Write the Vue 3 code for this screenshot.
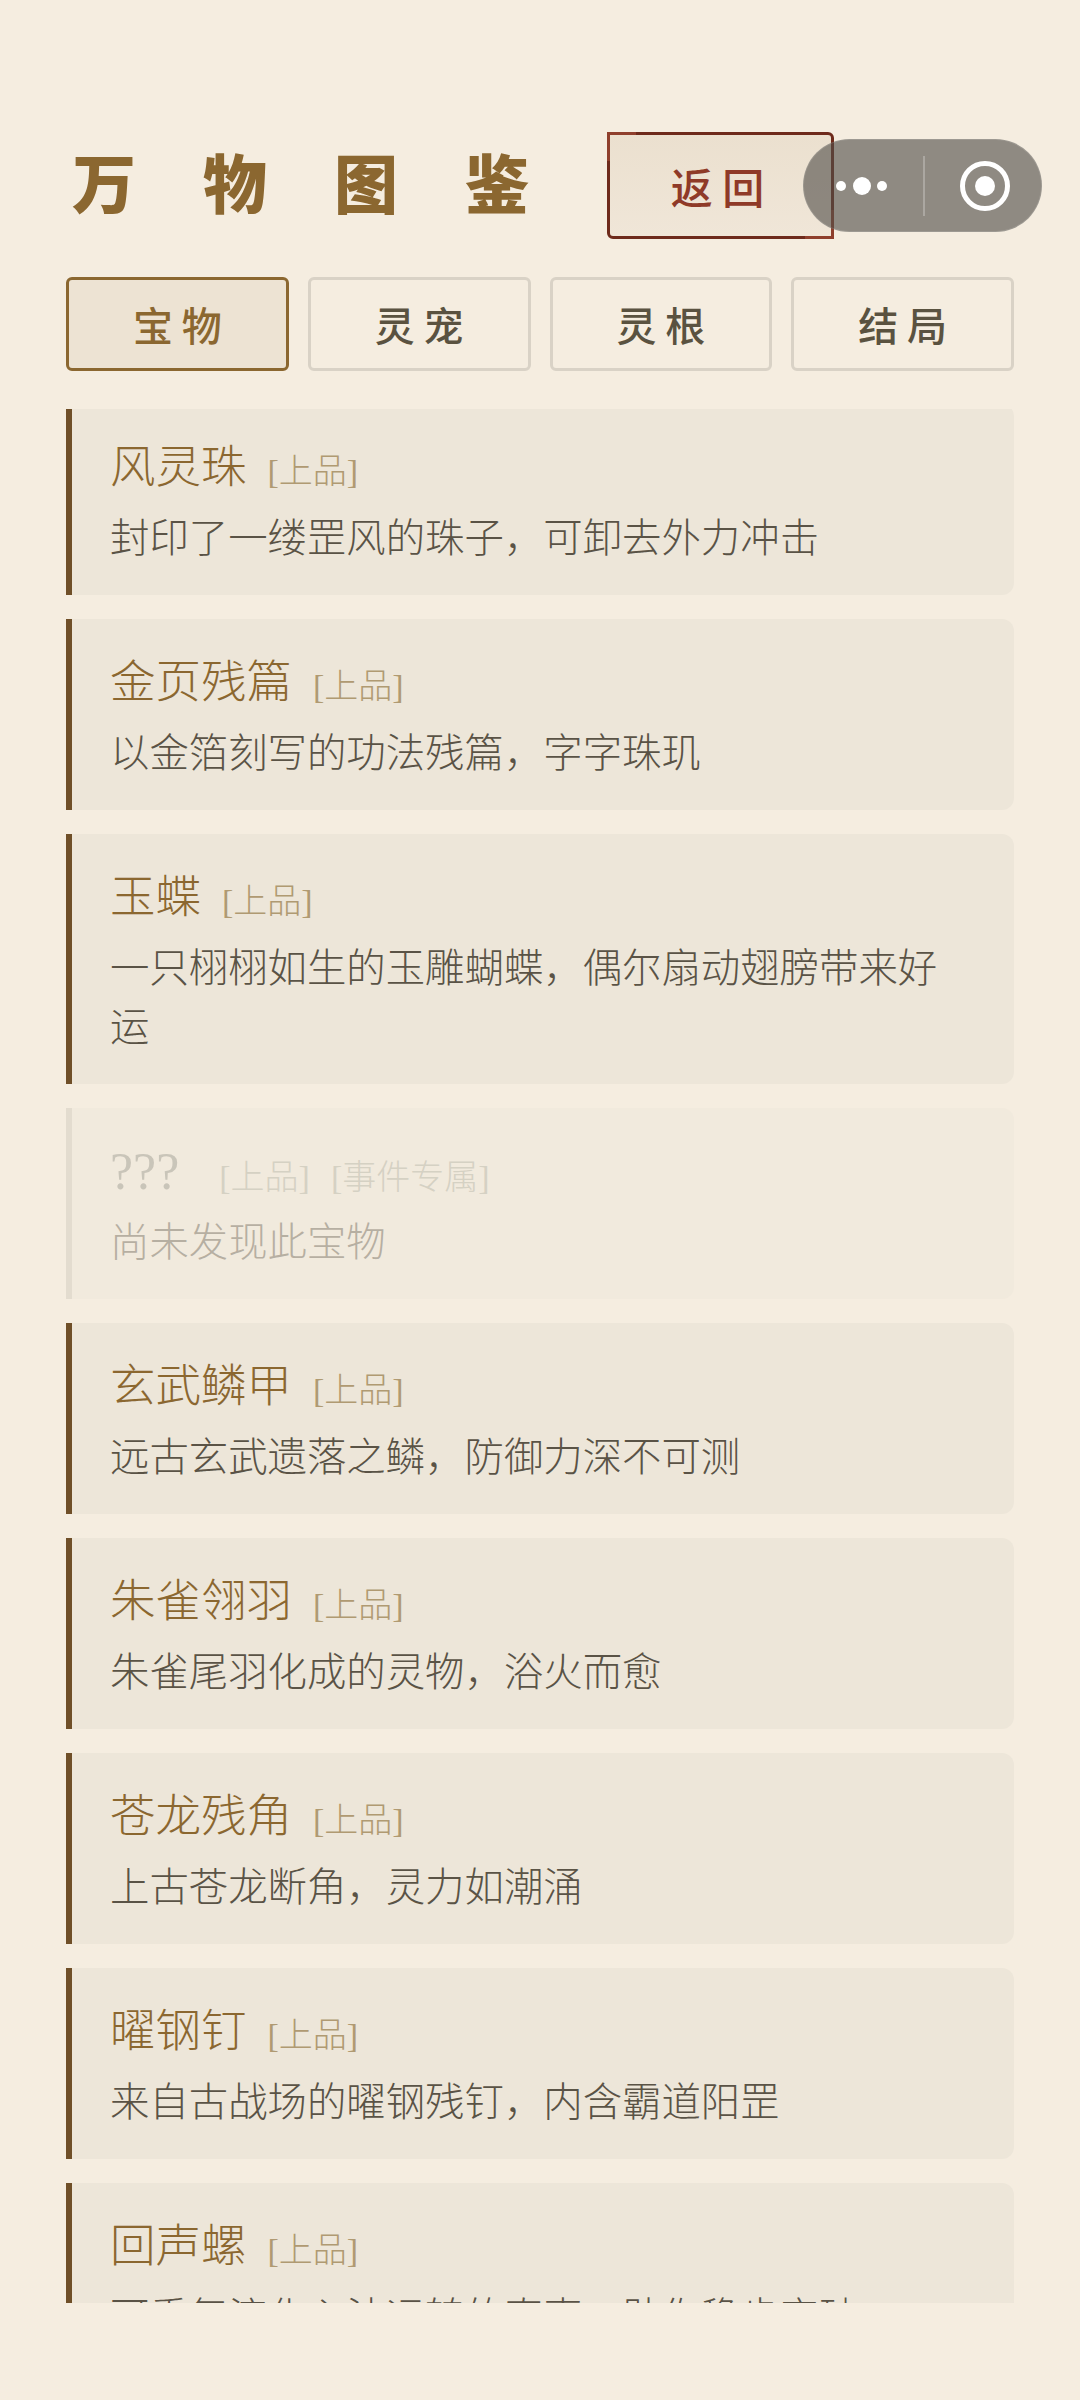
<script setup>
const tabs = [
  { label: '宝 物', active: true },
  { label: '灵 宠' },
  { label: '灵 根' },
  { label: '结 局' },
]
const items = [
  { name: '风灵珠', desc: '封印了一缕罡风的珠子，可卸去外力冲击' },
  { name: '金页残篇', desc: '以金箔刻写的功法残篇，字字珠玑' },
  { name: '玉蝶', desc: '一只栩栩如生的玉雕蝴蝶，偶尔扇动翅膀带来好运' },
  { name: '???', desc: '尚未发现此宝物', locked: true, extra: '[事件专属]' },
  { name: '玄武鳞甲', desc: '远古玄武遗落之鳞，防御力深不可测' },
  { name: '朱雀翎羽', desc: '朱雀尾羽化成的灵物，浴火而愈' },
  { name: '苍龙残角', desc: '上古苍龙断角，灵力如潮涌' },
  { name: '曜钢钉', desc: '来自古战场的曜钢残钉，内含霸道阳罡' },
  { name: '回声螺', desc: '可重复演化心法运转的真声，助你稳步突破' },
]
</script>

<template>
  <div class="page">
    <header class="head">
      <h1 class="title">万物图鉴</h1>
      <button class="back">返 回</button>
    </header>
    <nav class="tabs">
      <div v-for="t in tabs" :key="t.label" class="tab" :class="{ active: t.active }">{{ t.label }}</div>
    </nav>
    <div class="list">
      <div class="inner">
        <article v-for="it in items" :key="it.name" class="card" :class="{ locked: it.locked }">
          <div class="row">
            <span class="name">{{ it.name }}</span>
            <span class="tag">[上品]</span>
            <span v-if="it.extra" class="tag">{{ it.extra }}</span>
          </div>
          <p class="desc">{{ it.desc }}</p>
        </article>
      </div>
    </div>
    <div class="capsule">
      <svg class="dots" width="52" height="20" viewBox="0 0 52 20">
        <circle cx="5" cy="10" r="5" fill="#fff" />
        <circle cx="26" cy="10" r="9" fill="#fff" />
        <circle cx="46" cy="10" r="5" fill="#fff" />
      </svg>
      <i class="sep"></i>
      <svg width="50" height="50" viewBox="0 0 50 50">
        <circle cx="25" cy="25" r="22.5" fill="none" stroke="#fff" stroke-width="5" />
        <circle cx="25" cy="25" r="10" fill="#fff" />
      </svg>
    </div>
  </div>
</template>

<style scoped>
.page {
  position: relative;
  width: 1080px;
  height: 2400px;
  overflow: hidden;
  background: #f5ede0;
  box-sizing: border-box;
  padding: 132px 66px 0;
  font-family: "Liberation Serif", "Noto Sans CJK SC", serif;
}
.head {
  display: flex;
  align-items: center;
  height: 107px;
}
.title {
  margin: 0 0 12px 6px;
  font-size: 64px;
  font-weight: 900;
  letter-spacing: 67px;
  color: #8b6730;
  line-height: 1;
  white-space: nowrap;
  font-family: "Noto Sans CJK SC", sans-serif;
}
.back {
  position: absolute;
  left: 607px;
  top: 132px;
  width: 227px;
  height: 107px;
  padding: 0 6px 0 0;
  box-sizing: border-box;
  border: 3px solid #6e2a1b;
  border-radius: 0 6px 0 6px;
  background: linear-gradient(#ebe0cf, #f0e6d8);
  color: #8f3a28;
  font-size: 42px;
  font-weight: 500;
  font-family: "Noto Sans CJK SC", sans-serif;
}
.back::before,
.back::after {
  content: "";
  position: absolute;
  width: 26px;
  height: 26px;
  border: 3px solid #8f3f2c;
}
.back::before {
  left: -3px;
  top: -3px;
  border-right: 0;
  border-bottom: 0;
}
.back::after {
  right: -3px;
  bottom: -3px;
  border-left: 0;
  border-top: 0;
}
.tabs {
  display: flex;
  gap: 19px;
  margin-top: 38px;
}
.tab {
  flex: 1;
  height: 94px;
  box-sizing: border-box;
  border: 3px solid #d9d2c6;
  border-radius: 6px;
  display: flex;
  align-items: center;
  justify-content: center;
  font-size: 40px;
  font-weight: 500;
  color: #5a5240;
  font-family: "Noto Sans CJK SC", sans-serif;
}
.tab.active {
  border-color: #8b6730;
  background: #ede3d3;
  color: #8b6730;
}
.list {
  margin-top: 38px;
  height: 1894px;
  overflow: hidden;
}
.inner {
  margin-top: -5.5px;
  display: flex;
  flex-direction: column;
  gap: 24px;
}
.card {
  box-sizing: border-box;
  border-left: 6px solid #6f4f28;
  border-radius: 0 12px 12px 0;
  background: #ede6d9;
  padding: 31px 44px 26px 38px;
  flex: none;
}
.card.locked {
  opacity: 0.4;
  border-left-color: #c9c4b8;
}
.row {
  display: flex;
  align-items: baseline;
  gap: 21px;
  height: 66px;
}
.name {
  font-size: 45.5px;
  font-weight: 300;
  color: #8b6730;
  line-height: 66px;
}
.locked .name {
  font-size: 52px;
  margin-right: 19px;
  color: #8a8a80;
}
.tag {
  font-size: 34px;
  font-weight: 300;
  color: #b09a72;
}
.locked .tag {
  color: #a6a89a;
}
.desc {
  margin: 9px 0 0;
  font-size: 39.4px;
  font-weight: 300;
  line-height: 59px;
  color: #5a5346;
}
.capsule {
  position: absolute;
  left: 803px;
  top: 139px;
  width: 239px;
  height: 93px;
  box-sizing: border-box;
  border-radius: 47px;
  border: 1px solid rgba(255, 255, 255, 0.12);
  background: rgba(80, 78, 72, 0.62);
  display: flex;
  align-items: center;
  padding: 0 0 0 32px;
}
.dots {
  flex: none;
}
.sep {
  width: 2px;
  height: 60px;
  background: rgba(255, 255, 255, 0.25);
  margin: 0 35px;
  flex: none;
}
</style>

<style>
html, body { margin: 0; background: #f5ede0; }
</style>
